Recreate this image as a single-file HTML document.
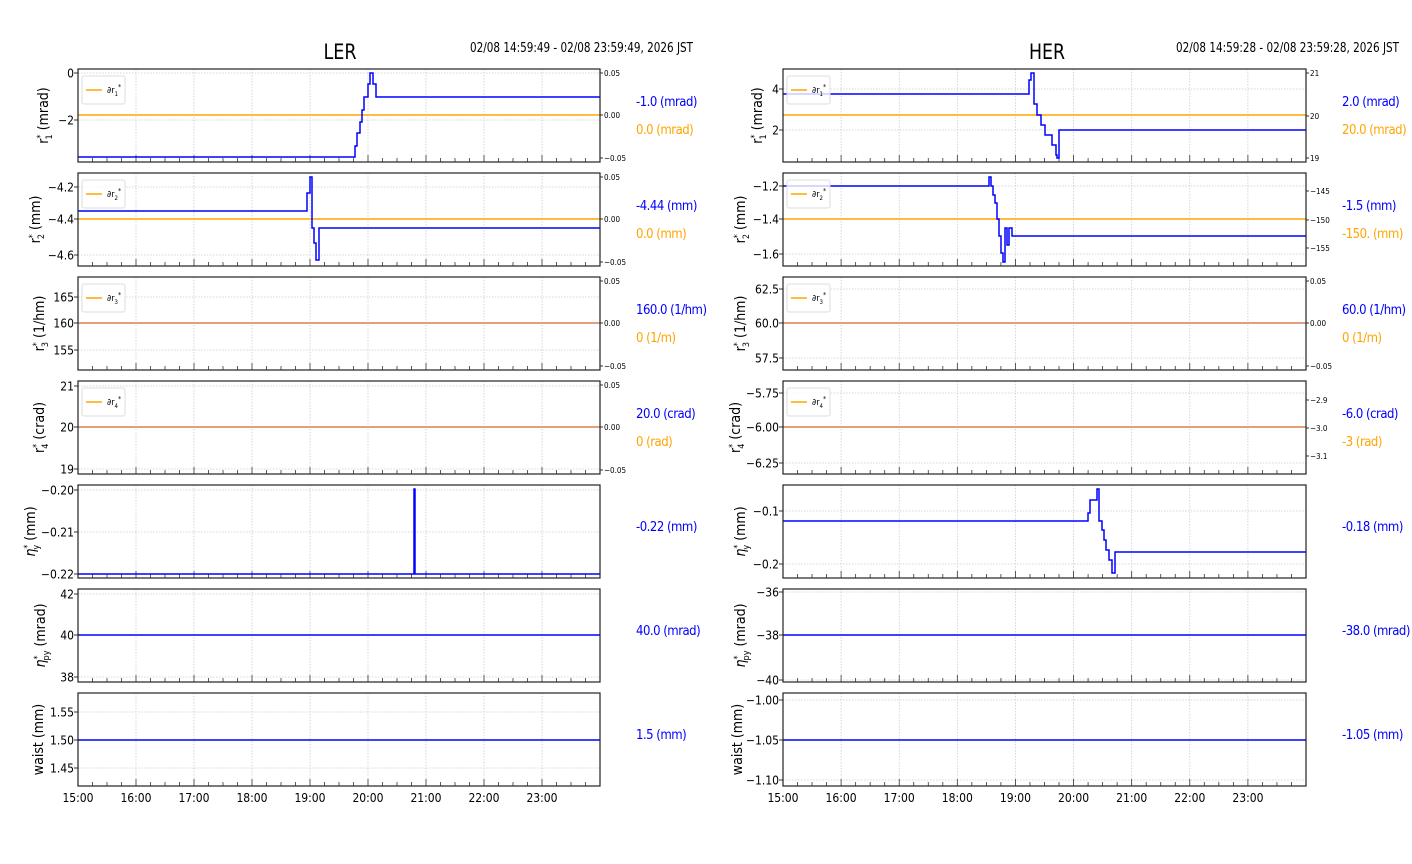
<!DOCTYPE html><html><head><meta charset="utf-8"><style>
html,body{margin:0;padding:0;background:#fff;width:1412px;height:864px;overflow:hidden}
svg text{font-family:"DejaVu Sans Condensed","Liberation Sans Narrow","Liberation Sans",sans-serif}
</style></head><body>
<svg id="s" width="1412" height="864" xmlns="http://www.w3.org/2000/svg">
<text x="340" y="59" font-size="21" text-anchor="middle" textLength="33" lengthAdjust="spacingAndGlyphs">LER</text>
<text x="470" y="52" font-size="13" textLength="223" lengthAdjust="spacingAndGlyphs">02/08 14:59:49 - 02/08 23:59:49, 2026 JST</text>
<text x="1047" y="59" font-size="21" text-anchor="middle" textLength="36" lengthAdjust="spacingAndGlyphs">HER</text>
<text x="1176" y="52" font-size="13" textLength="223" lengthAdjust="spacingAndGlyphs">02/08 14:59:28 - 02/08 23:59:28, 2026 JST</text>
</svg>
<script>
const S=document.getElementById('s');let h='';
const tops=[69,173,277,381,485,589,693],H=93;
const offL=[30,38,34,34,43,33,35],offR=[21,38,38,43,38,38,41];
function panel(x0,x1,ri,yt,rt,blue,orange,legend,vals,ylab){
 const top=tops[ri],bot=top+H,ppx=(x1-x0)/9;
 const X=t=>x0+(t-15)*ppx;
 for(let k=1;k<9;k++){const x=X(15+k);h+=`<line x1="${x}" y1="${top}" x2="${x}" y2="${bot}" stroke="#ccc" stroke-width="0.8" stroke-dasharray="1.5,1.5"/>`;}
 yt.forEach(([l,y])=>{h+=`<line x1="${x0}" y1="${y}" x2="${x1}" y2="${y}" stroke="#ccc" stroke-width="0.8" stroke-dasharray="1.5,1.5"/><line x1="${x0-4}" y1="${y}" x2="${x0}" y2="${y}" stroke="#333"/><text x="${x0-4}" y="${y+4.5}" font-size="12" text-anchor="end">${l}</text>`;});
 for(let k=0;k<=36;k++){const x=X(15+k/4);const L=k%4==0?7:4;h+=`<line x1="${x}" y1="${bot}" x2="${x}" y2="${bot-L}" stroke="#333" stroke-width="0.8"/>`;}
 if(rt){rt.forEach(([l,y])=>{h+=`<line x1="${x1}" y1="${y}" x2="${x1+3}" y2="${y}" stroke="#333"/><text x="${x1+4}" y="${y+3}" font-size="8">${l}</text>`;});}
 if(orange!=null)h+=`<line x1="${x0}" y1="${orange}" x2="${x1}" y2="${orange}" stroke="#ffa500" stroke-width="1.5"/>`;
 let d='';blue.forEach(([x,y],i)=>{ if(i==0)d+=`M${x} ${y}`; else d+=` H${x} V${y}`;});d+=` H${x1}`;
 const same=orange!=null&&blue.length==1&&orange==blue[0][1];
 h+=`<path d="${d}" fill="none" stroke="${same?'#d07070':'#0000ff'}" stroke-width="1.5"/>`;
 if(same) h+=`<line x1="${x0}" y1="${orange}" x2="${x1}" y2="${orange}" stroke="#e0a080" stroke-width="1"/>`;
 if(legend){h+=`<rect x="${x0+4}" y="${top+7}" width="43" height="28" rx="2" fill="#fff" fill-opacity="0.8" stroke="#ddd"/><line x1="${x0+8}" y1="${top+21}" x2="${x0+24}" y2="${top+21}" stroke="#ffa500" stroke-width="1.5"/><text x="${x0+29}" y="${top+24}" font-size="9">∂r<tspan font-size="6" dy="3">${legend}</tspan><tspan font-size="7" dy="-7">*</tspan></text>`;}
 h+=`<rect x="${x0}" y="${top}" width="${x1-x0}" height="${H}" fill="none" stroke="#222" stroke-width="1.2"/>`;
 const vx=x1+36;
 if(vals.length==2){h+=`<text x="${vx}" y="${top+37}" font-size="13" fill="#0000ff" letter-spacing="-0.5">${vals[0]}</text><text x="${vx}" y="${top+65}" font-size="13" fill="#ffa500" letter-spacing="-0.5">${vals[1]}</text>`;}
 else h+=`<text x="${vx}" y="${top+46}" font-size="13" fill="#0000ff" letter-spacing="-0.5">${vals[0]}</text>`;
 const off=(x0<700?offL:offR)[ri];
 h+=`<text transform="translate(${x0-off},${top+H/2}) rotate(-90)" font-size="14" text-anchor="middle" font-family="DejaVu Sans,sans-serif">${ylab}</text>`;
 if(ri==6){for(let k=0;k<9;k++)h+=`<text x="${X(15+k)}" y="${bot+16}" font-size="12" text-anchor="middle">${15+k}:00</text>`;}
}
const st=s=>`<tspan dy="-5" font-size="9">*</tspan><tspan dy="9" font-size="9" dx="-5">${s}</tspan><tspan dy="-4">  </tspan>`;
const ylab=[`r${st('1')}(mrad)`,`r${st('2')}(mm)`,`r${st('3')}(1/hm)`,`r${st('4')}(crad)`,`<tspan font-style="italic">η</tspan>${st('y')}(mm)`,`<tspan font-style="italic">η</tspan>${st('py')}(mrad)`,`waist (mm)`];
const r05=(t)=>[["0.05",t+4],["0.00",t+46],["−0.05",t+89]];
const L0=78,L1=600;
panel(L0,L1,0,[["0",73],["−2",120]],r05(69),[[78,157],[355,146],[357,133],[360,122],[362,110],[364,97],[368,84],[370,73],[373,84],[376,97]],115,'1',["-1.0 (mrad)","0.0 (mrad)"],ylab[0]);
panel(L0,L1,1,[["−4.2",187],["−4.4",219],["−4.6",255]],r05(173),[[78,211],[307,193],[310,177],[312,228],[314,243],[316,260],[319,228]],219,'2',["-4.44 (mm)","0.0 (mm)"],ylab[1]);
panel(L0,L1,2,[["165",297],["160",323],["155",350]],r05(277),[[78,323]],323,'3',["160.0 (1/hm)","0 (1/m)"],ylab[2]);
panel(L0,L1,3,[["21",386],["20",427],["19",469]],r05(381),[[78,427]],427,'4',["20.0 (crad)","0 (rad)"],ylab[3]);
panel(L0,L1,4,[["−0.20",490],["−0.21",532],["−0.22",574]],null,[[78,574],[414,489],[415,574]],null,null,["-0.22 (mm)"],ylab[4]);
panel(L0,L1,5,[["42",594],["40",635],["38",677]],null,[[78,635]],null,null,["40.0 (mrad)"],ylab[5]);
panel(L0,L1,6,[["1.55",712],["1.50",740],["1.45",768]],null,[[78,740]],null,null,["1.5 (mm)"],ylab[6]);
const R0=783,R1=1306;
panel(R0,R1,0,[["4",89],["2",130]],[["21",73],["20",116],["19",158]],[[783,94],[1029,80],[1031,73],[1034,104],[1037,115],[1041,125],[1045,135],[1052,145],[1056,155],[1057,158],[1059,130]],115,'1',["2.0 (mrad)","20.0 (mrad)"],ylab[0]);
panel(R0,R1,1,[["−1.2",186],["−1.4",219],["−1.6",254]],[["−145",191],["−150",220],["−155",248]],[[783,186],[989,177],[991,186],[993,195],[995,203],[997,219],[999,236],[1001,253],[1003,262],[1005,228],[1007,245],[1009,228],[1012,236]],219,'2',["-1.5 (mm)","-150. (mm)"],ylab[1]);
panel(R0,R1,2,[["62.5",289],["60.0",323],["57.5",358]],r05(277),[[783,323]],323,'3',["60.0 (1/hm)","0 (1/m)"],ylab[2]);
panel(R0,R1,3,[["−5.75",393],["−6.00",427],["−6.25",463]],[["−2.9",400],["−3.0",428],["−3.1",456]],[[783,427]],427,'4',["-6.0 (crad)","-3 (rad)"],ylab[3]);
panel(R0,R1,4,[["−0.1",511],["−0.2",564]],null,[[783,521],[1088,513],[1090,500],[1097,489],[1099,521],[1102,530],[1104,540],[1106,550],[1109,560],[1112,573],[1115,552]],null,null,["-0.18 (mm)"],ylab[4]);
panel(R0,R1,5,[["−36",592],["−38",635],["−40",680]],null,[[783,635]],null,null,["-38.0 (mrad)"],ylab[5]);
panel(R0,R1,6,[["−1.00",700],["−1.05",740],["−1.10",780]],null,[[783,740]],null,null,["-1.05 (mm)"],ylab[6]);
S.insertAdjacentHTML('beforeend',h);
</script>
</body></html>
